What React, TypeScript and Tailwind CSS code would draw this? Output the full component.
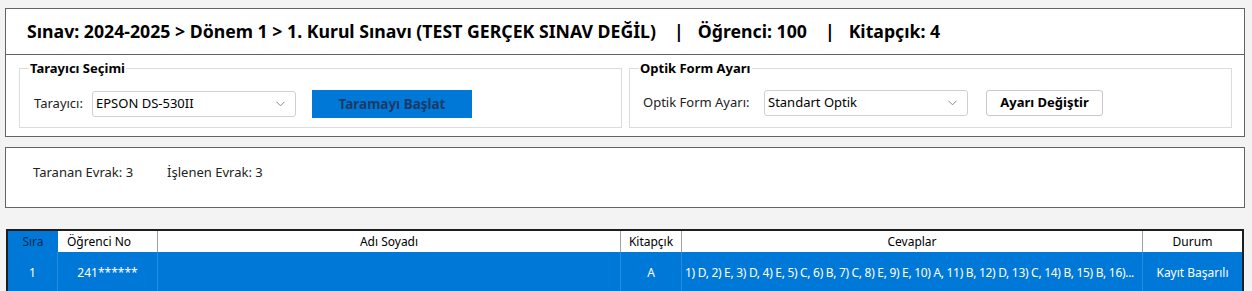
import React from "react";

const Chevron = () => (
  <svg width="9" height="6" viewBox="0 0 9 6" className="shrink-0">
    <path d="M0.5 0.8 L4.5 4.8 L8.5 0.8" fill="none" stroke="#7a7a7a" strokeWidth="0.9" />
  </svg>
);

function Select({ value, width }: { value: string; width: string }) {
  return (
    <div
      className={`${width} h-[26px] flex items-center justify-between pl-[3px] pr-[10px] border border-[#d0d0d0] rounded-[3px] bg-white text-[13px] text-black`}
    >
      <span>{value}</span>
      <Chevron />
    </div>
  );
}

export default function App() {
  return (
    <div
      className="w-[1252px] h-[291px] overflow-hidden bg-[#f3f3f3] pt-[8px] pl-[5px]"
      style={{ fontFamily: '"Noto Sans", "Open Sans", sans-serif' }}
    >
      {/* Top panel */}
      <div className="w-[1240px] border border-[#646464] bg-white">
        <div className="h-[46px] border-b border-[#646464] flex items-center pl-[21px] text-[17.7px] font-bold text-black whitespace-pre leading-none">
          <span>Sınav: 2024-2025 &gt; Dönem 1 &gt; 1. Kurul Sınavı (TEST GERÇEK SINAV DEĞİL)</span>
          <span className="ml-[18px] mr-[14px]">|</span>
          <span>Öğrenci: 100</span>
          <span className="ml-[18px] mr-[14px]">|</span>
          <span>Kitapçık: 4</span>
        </div>
        <div className="flex gap-[7px] pl-[13px] pr-[12px] pt-[6px] pb-[8px]">
          <fieldset className="flex-1 min-w-0 border border-[#dcdcdc] pb-[9px] pt-[15px]">
            <legend className="ml-[9px] px-[1px] text-[13px] font-bold text-black leading-[14px]">
              Tarayıcı Seçimi
            </legend>
            <div className="flex items-center pl-[14px]">
              <span className="text-[13px] text-[#222] w-[58px]">Tarayıcı:</span>
              <Select value="EPSON DS-530II" width="w-[204px]" />
              <button className="ml-[16px] w-[160px] h-[28px] bg-[#0078d7] text-[#1b3a66] text-[13.5px] font-bold">
                Taramayı Başlat
              </button>
            </div>
          </fieldset>
          <fieldset className="flex-1 min-w-0 border border-[#dcdcdc] pb-[9px] pt-[15px]">
            <legend className="ml-[9px] px-[1px] text-[13px] font-bold text-black leading-[14px]">
              Optik Form Ayarı
            </legend>
            <div className="flex items-center pl-[13px]">
              <span className="text-[13px] text-[#222] w-[121px]">Optik Form Ayarı:</span>
              <Select value="Standart Optik" width="w-[204px]" />
              <button className="ml-[18px] w-[117px] h-[26px] bg-white border border-[#c8c8c8] rounded-[3px] text-black text-[13px] font-bold">
                Ayarı Değiştir
              </button>
            </div>
          </fieldset>
        </div>
      </div>

      {/* Stats panel */}
      <div className="mt-[10px] w-[1240px] h-[61px] border border-[#646464] bg-white flex items-center gap-[34px] pl-[27px] pb-[10px] text-[13px] text-[#222]">
        <span>Taranan Evrak: 3</span>
        <span>İşlenen Evrak: 3</span>
      </div>

      {/* Table */}
      <div className="mt-[21px] ml-[1px] w-[1238px] border-2 border-b-0 border-[#1e1e1e] bg-white text-[12px]">
        <div className="flex h-[21px] items-stretch text-black">
          <div className="w-[50px] bg-[#0078d7] flex items-center justify-center text-[#0b2a50]">Sıra</div>
          <div className="w-[100px] flex items-center pl-[9px] border-r border-[#a0a0a0]">Öğrenci No</div>
          <div className="w-[463px] flex items-center justify-center border-r border-[#a0a0a0]">Adı Soyadı</div>
          <div className="w-[61px] flex items-center justify-center border-r border-[#a0a0a0]">Kitapçık</div>
          <div className="w-[461px] flex items-center justify-center border-r border-[#a0a0a0]">Cevaplar</div>
          <div className="flex-1 flex items-center justify-center">Durum</div>
        </div>
        <div className="flex h-[45px] bg-[#0078d7] text-white items-stretch">
          <div className="w-[50px] flex items-center justify-center pb-[3px] border-r border-[#2a8ae0]">1</div>
          <div className="w-[100px] flex items-center justify-center pb-[3px] border-r border-[#2a8ae0]">241******</div>
          <div className="w-[463px] border-r border-[#2a8ae0]"></div>
          <div className="w-[61px] flex items-center justify-center pb-[3px] border-r border-[#2a8ae0]">A</div>
          <div className="w-[461px] flex items-center pl-[3px] pb-[3px] border-r border-[#2a8ae0] whitespace-nowrap overflow-hidden tracking-[-0.3px]">
            1) D, 2) E, 3) D, 4) E, 5) C, 6) B, 7) C, 8) E, 9) E, 10) A, 11) B, 12) D, 13) C, 14) B, 15) B, 16)...
          </div>
          <div className="flex-1 flex items-center justify-center pb-[3px]">Kayıt Başarılı</div>
        </div>
      </div>
    </div>
  );
}
